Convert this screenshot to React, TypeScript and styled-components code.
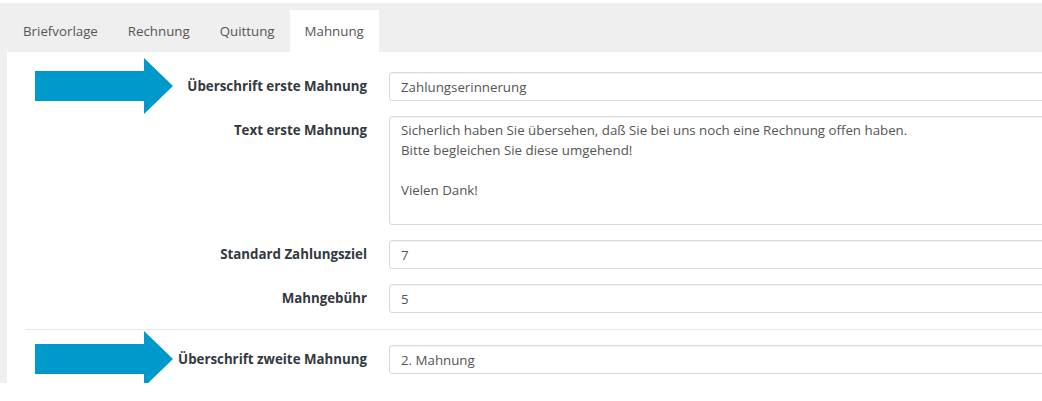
import React from "react";
import styled, { createGlobalStyle } from "styled-components";

const GlobalStyle = createGlobalStyle`
  html, body {
    margin: 0;
    padding: 0;
    background: #ffffff;
    overflow: hidden;
  }
  body {
    font-family: "Open Sans", "Liberation Sans", sans-serif;
    font-size: 13.3px;
    color: #555555;
  }
`;

const Frame = styled.div`
  margin-top: 3px;
  width: 1042px;
  height: 380px;
  background: #efefef;
  padding-left: 7px;
  box-sizing: border-box;
  display: flex;
  flex-direction: column;
`;

const TabBar = styled.div`
  display: flex;
  align-items: flex-end;
  height: 49px;
  padding-left: 1px;
  flex-shrink: 0;
`;

const Tab = styled.div<{ $active?: boolean }>`
  height: 42px;
  line-height: 42px;
  padding: 0 15px;
  font-size: 13.3px;
  color: #555555;
  background: ${(p) => (p.$active ? "#ffffff" : "transparent")};
  white-space: nowrap;
`;

const Content = styled.div`
  flex: 1;
  background: #ffffff;
  padding-top: 20px;
  display: flex;
  flex-direction: column;
  gap: 15px;
`;

const Row = styled.div`
  position: relative;
  display: grid;
  grid-template-columns: 360px 700px;
  column-gap: 22px;
  align-items: start;
`;

const Label = styled.label`
  text-align: right;
  font-weight: 700;
  font-size: 13.3px;
  line-height: 29px;
  color: #333940;
  white-space: nowrap;
`;

const fieldBase = `
  box-sizing: border-box;
  width: 100%;
  border: 1px solid #d9d9d9;
  border-radius: 3px;
  box-shadow: inset 0 1px 1px rgba(0, 0, 0, 0.05);
  background: #ffffff;
  font-family: "Open Sans", "Liberation Sans", sans-serif;
  font-size: 13.3px;
  color: #555555;
  padding: 0 11px;
  margin: 0;
  outline: none;
`;

const TextInput = styled.input`
  ${fieldBase}
  height: 29px;
  line-height: 27px;
`;

const TextArea = styled.textarea`
  ${fieldBase}
  height: 109px;
  padding-top: 3px;
  line-height: 20px;
  resize: none;
  overflow: hidden;
  display: block;
`;

const Divider = styled.div`
  height: 1px;
  margin: 1px 0 0 18px;
  background: #e6e6e6;
`;

const ArrowMark = styled.svg`
  position: absolute;
  left: 28px;
  top: -14px;
  width: 138px;
  height: 56px;
  pointer-events: none;
`;

const Arrow = () => (
  <ArrowMark viewBox="0 0 138 56">
    <path d="M0 13 H109 V0 L138 28 L109 56 V43 H0 Z" fill="#0099cc" />
  </ArrowMark>
);

const tabs = ["Briefvorlage", "Rechnung", "Quittung", "Mahnung"];

export default function App() {
  return (
    <>
      <GlobalStyle />
      <Frame>
        <TabBar>
          {tabs.map((t) => (
            <Tab key={t} $active={t === "Mahnung"}>
              {t}
            </Tab>
          ))}
        </TabBar>
        <Content>
          <Row>
            <Arrow />
            <Label>Überschrift erste Mahnung</Label>
            <TextInput readOnly defaultValue="Zahlungserinnerung" />
          </Row>
          <Row>
            <Label>Text erste Mahnung</Label>
            <TextArea
              readOnly
              defaultValue={
                "Sicherlich haben Sie übersehen, daß Sie bei uns noch eine Rechnung offen haben.\nBitte begleichen Sie diese umgehend!\n\nVielen Dank!"
              }
            />
          </Row>
          <Row>
            <Label>Standard Zahlungsziel</Label>
            <TextInput readOnly defaultValue="7" />
          </Row>
          <Row>
            <Label>Mahngebühr</Label>
            <TextInput readOnly defaultValue="5" />
          </Row>
          <Divider />
          <Row>
            <Arrow />
            <Label>Überschrift zweite Mahnung</Label>
            <TextInput readOnly defaultValue="2. Mahnung" />
          </Row>
        </Content>
      </Frame>
    </>
  );
}
